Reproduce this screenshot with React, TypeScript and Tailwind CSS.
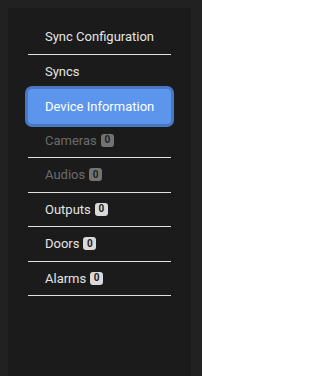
import React from "react";

type Item = { label: string; badge?: number; disabled?: boolean; active?: boolean; border?: boolean };

const items: Item[] = [
  { label: "Sync Configuration", border: true },
  { label: "Syncs", border: false },
  { label: "Device Information", active: true },
  { label: "Cameras", badge: 0, disabled: true, border: true },
  { label: "Audios", badge: 0, disabled: true, border: true },
  { label: "Outputs", badge: 0, border: true },
  { label: "Doors", badge: 0, border: true },
  { label: "Alarms", badge: 0, border: true },
];

export default function App() {
  return (
    <div
      className="w-[202px] min-h-screen bg-[#212121] pl-2 pt-2"
      style={{ fontFamily: "Roboto, 'Noto Sans', sans-serif" }}
    >
      <div className="w-[183px] bg-[#1b1b1b] min-h-[368px] px-5 pt-3">
        <ul className="flex flex-col">
          {items.map((it) => (
            <li
              key={it.label}
              className={
                "h-[34.5px] flex items-center pl-[17px] text-[13px] leading-none " +
                (it.active
                  ? "relative z-10 bg-[#5b95ec] text-white rounded-[4px] ring-[3px] ring-[#4a78c2]"
                  : it.border
                  ? "border-b border-[#e2e2e2] "
                  : "") +
                (it.disabled ? " text-[#6b6b6b]" : it.active ? "" : " text-[#e4e4e4]")
              }
            >
              <span>{it.label}</span>
              {it.badge !== undefined && (
                <span
                  className={
                    "ml-1 w-[13px] h-[13px] rounded-[3px] flex items-center justify-center text-[10px] font-bold leading-none " +
                    (it.disabled ? "bg-[#737373] text-[#222]" : "bg-[#d9d9d9] text-[#1e1e1e]")
                  }
                >
                  {it.badge}
                </span>
              )}
            </li>
          ))}
        </ul>
      </div>
    </div>
  );
}
